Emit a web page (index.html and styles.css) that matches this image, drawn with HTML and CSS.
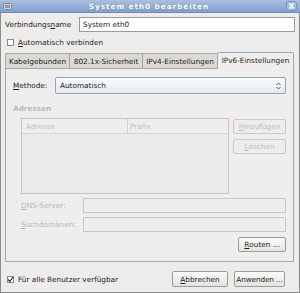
FILE: index.html
```html
<!DOCTYPE html>
<html>
<head>
    <title>System eth0 bearbeiten</title>
    <meta charset="utf-8">
    <link rel="stylesheet" href="styles.css">
</head>
<body>
    <div class="window">
        <div class="titlebar">
            <span class="app-icon">
                <svg width="9" height="9" viewBox="0 0 9 9">
                    <rect x="0.5" y="1.5" width="8" height="6" rx="1" fill="#c9d3df" stroke="#7d8896"/>
                    <rect x="2" y="3" width="5" height="3" fill="#8e9bab"/>
                </svg>
            </span>
            <span class="title">System eth0 bearbeiten</span>
            <span class="close">
                <svg width="11" height="10" viewBox="0 0 11 10">
                    <rect x="0.5" y="0.5" width="10" height="9" rx="2" fill="#a8bddb" stroke="#7390bb"/>
                    <path d="M3.5 2.5 L7.5 7.5 M7.5 2.5 L3.5 7.5" stroke="#fff" stroke-width="1.4"/>
                </svg>
            </span>
        </div>

        <div class="content">
            <div class="name-row">
                <span class="name-label">Verbindungs<u>n</u>ame</span>
                <div class="entry">System eth0</div>
            </div>

            <div class="check-row">
                <span class="checkbox"></span>
                <span><u>A</u>utomatisch verbinden</span>
            </div>

            <div class="tabs">
                <div class="tab tab-wired">Kabelgebunden</div>
                <div class="tab tab-sec">802.1x-Sicherheit</div>
                <div class="tab tab-v4">IPv4-Einstellungen</div>
                <div class="tab tab-v6 active">IPv6-Einstellungen</div>
            </div>

            <div class="panel">
                <div class="method-row">
                    <span class="method-label"><u>M</u>ethode:</span>
                    <div class="combo">
                        <span>Automatisch</span>
                        <svg class="combo-arrow" width="5" height="8" viewBox="0 0 5 8">
                            <path d="M0.5 3 L2.5 1 L4.5 3 M0.5 5 L2.5 7 L4.5 5" fill="none" stroke="#555" stroke-width="1"/>
                        </svg>
                    </div>
                </div>

                <div class="section-title">Adressen</div>

                <div class="addr-area">
                    <div class="addr-table">
                        <div class="addr-head">
                            <span class="col-addr">Adresse</span>
                            <span class="col-prefix">Präfix</span>
                        </div>
                    </div>
                    <div class="addr-buttons">
                        <div class="button disabled"><u>H</u>inzufügen</div>
                        <div class="button disabled"><u>L</u>öschen</div>
                    </div>
                </div>

                <div class="field-row">
                    <span class="field-label"><u>D</u>NS-Server:</span>
                    <div class="entry disabled-entry"></div>
                </div>
                <div class="field-row">
                    <span class="field-label"><u>S</u>uchdomänen:</span>
                    <div class="entry disabled-entry"></div>
                </div>

                <div class="routes-row">
                    <div class="button routes"><u>R</u>outen ...</div>
                </div>
            </div>

            <div class="bottom-row">
                <span class="checkbox checked">
                    <svg width="7" height="7" viewBox="0 0 7 7">
                        <path d="M1 3.5 L2.8 5.5 L6 1" fill="none" stroke="#333" stroke-width="1.2"/>
                    </svg>
                </span>
                <span class="all-users">Für alle Benutzer verfügbar</span>
                <div class="button cancel"><u>A</u>bbrechen</div>
                <div class="button apply">Anwenden ...</div>
            </div>
        </div>
    </div>
</body>
</html>
```

FILE: styles.css
```css
:root {
    --windowBg: #edecea;
    --panelBg: #efeeec;
    --border: #a7a6a3;
    --disabled: #b9b8b5;
    --text: #1e1e1e;
}

body {
    margin: 0;
    font-family: "DejaVu Sans", sans-serif;
    font-size: 7.3px;
    color: var(--text);
    background-color: #fff;
}
u {
    text-decoration-thickness: 1px;
    text-underline-offset: 1px;
}

.window {
    width: 300px;
    height: 293px;
    box-sizing: border-box;
    border: 1px solid #8b8b8b;
    border-top: none;
    background-color: var(--windowBg);
    display: flex;
    flex-direction: column;
}

/* title bar ---- */
.titlebar {
    height: 13px;
    margin: 0 -1px;
    display: flex;
    align-items: center;
    background: linear-gradient(#a9c0e0, #819fcb);
    border-bottom: 1px solid #6f8db9;
    box-sizing: border-box;
}
.app-icon {
    display: flex;
    margin-left: 3px;
}
.title {
    flex: 1;
    text-align: center;
    color: #fff;
    font-weight: bold;
    font-size: 7.4px;
    letter-spacing: 0.9px;
    text-shadow: 0 0 1px #5d78a3;
}
.close {
    display: flex;
    margin-right: 3px;
}

/* content ---- */
.content {
    flex: 1;
    padding: 0 5px 0 4px;
    display: flex;
    flex-direction: column;
}
.name-row {
    margin-top: 4px;
    height: 15px;
    display: flex;
    align-items: center;
}
.name-label {
    width: 74px;
}
.entry {
    flex: 1;
    height: 15px;
    box-sizing: border-box;
    border: 1px solid #9b9a97;
    background-color: #fff;
    padding-left: 3px;
    display: flex;
    align-items: center;
    margin-right: -1px;
}
.check-row {
    margin-top: 5px;
    height: 10px;
    display: flex;
    align-items: center;
}
.checkbox {
    width: 7px;
    height: 7px;
    box-sizing: border-box;
    border: 1px solid #8c8b88;
    background-color: #fff;
    margin: 0 4px 0 2px;
    display: flex;
    align-items: center;
    justify-content: center;
}
.checkbox svg {
    margin: -1px;
}

/* tabs ---- */
.tabs {
    margin-top: 4px;
    height: 17px;
    display: flex;
    align-items: flex-end;
}
.tab {
    height: 15px;
    box-sizing: border-box;
    border: 1px solid var(--border);
    border-bottom: none;
    border-right: none;
    background-color: #dbd9d5;
    display: flex;
    align-items: center;
    justify-content: center;
    white-space: nowrap;
}
.tab-wired { width: 64px; }
.tab-sec { width: 73px; }
.tab-v4 { width: 75px; }
.tab-v6 {
    width: 77px;
    height: 17px;
    border-right: 1px solid var(--border);
    border-top: 1px solid #8fa6c8;
    border-radius: 2px 2px 0 0;
    background-color: var(--panelBg);
    padding-bottom: 1px;
    margin-bottom: -1px;
    position: relative;
}

/* notebook panel ---- */
.panel {
    height: 194px;
    box-sizing: border-box;
    border: 1px solid var(--border);
    background-color: var(--panelBg);
    padding: 8px 7px 0 7px;
    display: flex;
    flex-direction: column;
}
.method-row {
    height: 17px;
    display: flex;
    align-items: center;
}
.method-label {
    width: 42px;
}
.combo {
    flex: 1;
    height: 17px;
    box-sizing: border-box;
    border: 1px solid #8ea2c1;
    border-radius: 2px;
    background: linear-gradient(#f9fafc, #e6e9ee);
    display: flex;
    align-items: center;
    justify-content: space-between;
    padding: 0 4px 0 4px;
}
.section-title {
    margin-top: 10px;
    height: 10px;
    line-height: 10px;
    font-weight: bold;
    color: var(--disabled);
}
.addr-area {
    margin-top: 4px;
    padding-left: 8px;
    display: flex;
    gap: 4px;
}
.addr-table {
    width: 208px;
    height: 76px;
    box-sizing: border-box;
    border: 1px solid #c7c6c3;
    background-color: #ebeae8;
}
.addr-head {
    height: 14px;
    display: flex;
    border-bottom: 1px solid #d5d4d1;
    background-color: #efeeec;
    color: #c2c1be;
}
.col-addr {
    width: 106px;
    padding-left: 4px;
    box-sizing: border-box;
    border-right: 1px solid #d2d1ce;
    display: flex;
    align-items: center;
}
.col-prefix {
    padding-left: 2px;
    display: flex;
    align-items: center;
}
.addr-buttons {
    width: 53px;
    padding-top: 1px;
    display: flex;
    flex-direction: column;
    gap: 5px;
}

.button {
    height: 15px;
    box-sizing: border-box;
    border: 1px solid #9c9b98;
    border-radius: 2px;
    background: linear-gradient(#fbfbfa, #e4e3df);
    display: flex;
    align-items: center;
    justify-content: center;
    white-space: nowrap;
}
.button.disabled {
    color: #bdbcb9;
    border-color: #cbcac7;
    background: #eeedeb;
}

.field-row {
    margin-top: 4px;
    height: 15px;
    padding-left: 8px;
    display: flex;
    align-items: center;
    color: var(--disabled);
}
.field-label {
    width: 62px;
}
.disabled-entry {
    background-color: #efeeec;
    border-color: #c9c8c5;
    margin-right: 0;
}
.routes-row {
    margin-top: 5px;
    display: flex;
    justify-content: flex-end;
}
.routes {
    width: 48px;
}

/* bottom ---- */
.bottom-row {
    margin-top: 9px;
    height: 16px;
    display: flex;
    align-items: center;
}
.all-users {
    flex: 1;
}
.cancel {
    width: 56px;
    height: 16px;
    margin-right: 6px;
}
.apply {
    width: 51px;
    height: 16px;
    margin-right: 9px;
    letter-spacing: -0.1px;
}
```
